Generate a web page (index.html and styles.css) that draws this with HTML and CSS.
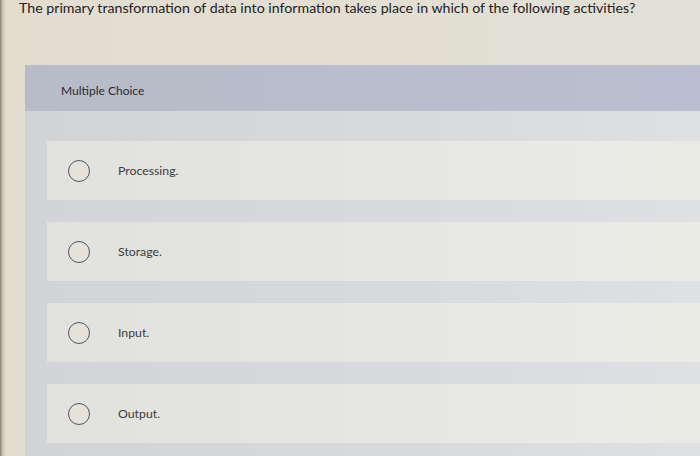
FILE: index.html
```html
<!DOCTYPE html>
<html>
<head>
<meta charset="utf-8">
<link rel="stylesheet" href="styles.css">
</head>
<body>
<div class="page">
  <div class="question">The primary transformation of data into information takes place in which of the following activities?</div>
  <div class="panel">
    <div class="panel-head">Multiple Choice</div>
    <div class="options">
      <div class="option"><span class="radio"></span><span class="label">Processing.</span></div>
      <div class="option"><span class="radio"></span><span class="label">Storage.</span></div>
      <div class="option"><span class="radio"></span><span class="label">Input.</span></div>
      <div class="option"><span class="radio"></span><span class="label">Output.</span></div>
    </div>
  </div>
</div>
</body>
</html>
```
FILE: styles.css
```css
html, body {
  margin: 0;
  padding: 0;
}
body {
  width: 700px;
  height: 456px;
  overflow: hidden;
  background: linear-gradient(to right, #8a8274 0, #cfcabd 3px, #e2ddcf 6px, #e3e0d6 100%);
  font-family: Lato, "Liberation Sans", sans-serif;
}
.page {
  display: flex;
  flex-direction: column;
  height: 456px;
}
.question {
  height: 65px;
  padding-left: 19px;
  font-size: 14.2px;
  line-height: 15px;
  color: #222226;
}
.panel {
  flex: 1;
  margin-left: 25px;
  background: linear-gradient(to right, #d2d3d6 0, #d8dade 60%, #dfe0e3 100%);
}
.panel-head {
  height: 46px;
  box-sizing: border-box;
  padding-top: 5px;
  display: flex;
  align-items: center;
  padding-left: 36px;
  background: linear-gradient(to right, #b8bcc8 0, #b9bdcd 60%, #babed0 100%);
  font-size: 12px;
  color: #2a2a30;
}
.options {
  display: flex;
  flex-direction: column;
  gap: 22px;
  padding: 30px 0 0 22px;
}
.option {
  height: 59px;
  display: flex;
  align-items: center;
  padding-left: 21px;
  background: linear-gradient(to right, #e1e1dd 0, #e6e6e3 50%, #ebebe6 100%);
}
.radio {
  width: 20px;
  height: 20px;
  border: 1.7px solid #555558;
  border-radius: 50%;
  background: #e4e2da;
  flex: none;
}
.label {
  margin-left: 28px;
  font-size: 12.3px;
  color: #3c3c40;
}
```
